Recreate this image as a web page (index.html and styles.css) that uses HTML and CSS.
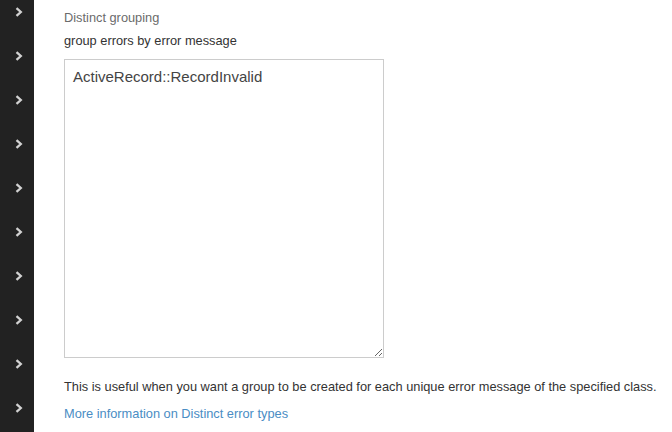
FILE: index.html
```html
<!DOCTYPE html>
<html>
<head>
<meta charset="utf-8">
<link rel="stylesheet" href="styles.css">
</head>
<body>
<div class="layout">
  <nav class="sidebar">
    <ul class="nav-list">
      <li class="nav-item"><svg class="chev" viewBox="0 0 8 10" width="8" height="10"><path d="M1.5 1.2 L5.8 5 L1.5 8.8" fill="none" stroke="#d2d2d2" stroke-width="2.3"/></svg></li>
      <li class="nav-item"><svg class="chev" viewBox="0 0 8 10" width="8" height="10"><path d="M1.5 1.2 L5.8 5 L1.5 8.8" fill="none" stroke="#d2d2d2" stroke-width="2.3"/></svg></li>
      <li class="nav-item"><svg class="chev" viewBox="0 0 8 10" width="8" height="10"><path d="M1.5 1.2 L5.8 5 L1.5 8.8" fill="none" stroke="#d2d2d2" stroke-width="2.3"/></svg></li>
      <li class="nav-item"><svg class="chev" viewBox="0 0 8 10" width="8" height="10"><path d="M1.5 1.2 L5.8 5 L1.5 8.8" fill="none" stroke="#d2d2d2" stroke-width="2.3"/></svg></li>
      <li class="nav-item"><svg class="chev" viewBox="0 0 8 10" width="8" height="10"><path d="M1.5 1.2 L5.8 5 L1.5 8.8" fill="none" stroke="#d2d2d2" stroke-width="2.3"/></svg></li>
      <li class="nav-item"><svg class="chev" viewBox="0 0 8 10" width="8" height="10"><path d="M1.5 1.2 L5.8 5 L1.5 8.8" fill="none" stroke="#d2d2d2" stroke-width="2.3"/></svg></li>
      <li class="nav-item"><svg class="chev" viewBox="0 0 8 10" width="8" height="10"><path d="M1.5 1.2 L5.8 5 L1.5 8.8" fill="none" stroke="#d2d2d2" stroke-width="2.3"/></svg></li>
      <li class="nav-item"><svg class="chev" viewBox="0 0 8 10" width="8" height="10"><path d="M1.5 1.2 L5.8 5 L1.5 8.8" fill="none" stroke="#d2d2d2" stroke-width="2.3"/></svg></li>
      <li class="nav-item"><svg class="chev" viewBox="0 0 8 10" width="8" height="10"><path d="M1.5 1.2 L5.8 5 L1.5 8.8" fill="none" stroke="#d2d2d2" stroke-width="2.3"/></svg></li>
      <li class="nav-item"><svg class="chev" viewBox="0 0 8 10" width="8" height="10"><path d="M1.5 1.2 L5.8 5 L1.5 8.8" fill="none" stroke="#d2d2d2" stroke-width="2.3"/></svg></li>
    </ul>
  </nav>
  <main class="content">
    <div class="label-muted">Distinct grouping</div>
    <label class="label" for="msg">group errors by error message</label>
    <textarea id="msg" class="field">ActiveRecord::RecordInvalid</textarea>
    <p class="help">This is useful when you want a group to be created for each unique error message of the specified class.</p>
    <a class="more" href="#">More information on Distinct error types</a>
  </main>
</div>
</body>
</html>
```

FILE: styles.css
```css
html, body {
  margin: 0;
  padding: 0;
  height: 100%;
  background: #ffffff;
  overflow: hidden;
}
body {
  font-family: "Liberation Sans", Arial, sans-serif;
}
.layout {
  display: flex;
  height: 432px;
}
.sidebar {
  width: 34px;
  flex: 0 0 34px;
  background: #222222;
  overflow: hidden;
}
.nav-list {
  list-style: none;
  margin: -10px 0 0 0;
  padding: 0;
}
.nav-item {
  height: 44px;
  display: flex;
  align-items: center;
  padding-left: 15px;
}
.chev {
  display: block;
}
.content {
  flex: 1;
  padding: 10px 0 0 30px;
  display: flex;
  flex-direction: column;
  align-items: flex-start;
}
.label-muted {
  font-size: 12.8px;
  color: #6b6b6b;
  line-height: 16px;
}
.label {
  font-size: 12.8px;
  color: #333333;
  line-height: 16px;
  margin-top: 7px;
}
.field {
  margin-top: 10px;
  width: 320px;
  height: 299px;
  box-sizing: border-box;
  border: 1px solid #cccccc;
  border-radius: 0;
  padding: 7px 8px;
  font-family: "Liberation Sans", Arial, sans-serif;
  font-size: 15px;
  line-height: 20px;
  color: #444444;
  resize: vertical;
  outline: none;
}
.help {
  font-size: 12.8px;
  color: #333333;
  line-height: 16px;
  margin: 21px 0 0 0;
}
.more {
  font-size: 12.8px;
  color: #4a8dc4;
  line-height: 16px;
  text-decoration: none;
  margin-top: 11px;
}
```
